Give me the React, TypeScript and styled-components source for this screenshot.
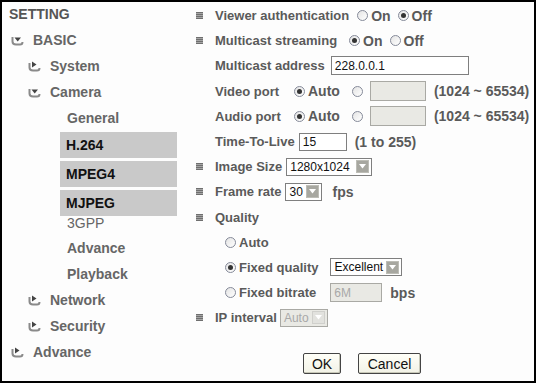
import React from "react";
import styled, {createGlobalStyle} from "styled-components";

const GlobalStyle = createGlobalStyle`
  html, body {
    margin: 0;
    padding: 0;
    background: #fff;
  }
  body {
    font-family: "Liberation Sans", Arial, sans-serif;
  }
`;

const Frame = styled.div`
  width: 536px;
  height: 383px;
  box-sizing: border-box;
  border: 2px solid #000;
  background: #fdfdfd;
  display: flex;
  overflow: hidden;
`;

// ---------- left menu ----------
const Menu = styled.div`
  width: 183px;
  flex: none;
  display: flex;
  flex-direction: column;
`;

const MenuTitle = styled.div`
  height: 25px;
  line-height: 25px;
  padding-left: 7px;
  font-size: 14px;
  font-weight: bold;
  color: #555;
`;

const MenuItem = styled.div<{$pad: number; $h?: number; $thin?: boolean}>`
  display: flex;
  align-items: ${p => (p.$thin ? "flex-start" : "center")};
  height: ${p => p.$h || 26}px;
  line-height: ${p => (p.$thin ? "14px" : "normal")};
  padding-left: ${p => p.$pad}px;
  font-size: 14px;
  font-weight: ${p => (p.$thin ? "normal" : "bold")};
  color: #666;
`;

const TreeIcon = styled.svg`
  width: 14px;
  height: 12px;
  margin-right: 9px;
  flex: none;
`;

const SubBox = styled.div<{$mt: number}>`
  display: flex;
  align-items: center;
  height: 26px;
  width: 111px;
  margin: ${p => p.$mt}px 0 0 58px;
  padding-left: 6px;
  background: #c9c9c9;
  font-size: 14px;
  font-weight: bold;
  color: #111;
`;

function Arrow({open}: {open: boolean}) {
  return (
    <TreeIcon viewBox="0 0 14 12">
      <path d="M2.5 3 V7.5 Q2.5 10.5 6 10.5 H10 Q12.5 10.5 12.5 8" fill="none" stroke="#8a8a8a" strokeWidth="2"/>
      {open
        ? <polygon points="4.5,3.5 11,3.5 7.7,7.5" fill="#444"/>
        : <polygon points="5,1.5 9.5,4.5 5,7.5" fill="#444"/>}
    </TreeIcon>
  );
}

// ---------- right panel ----------
const Panel = styled.div`
  flex: 1;
  display: flex;
  flex-direction: column;
  padding-top: 1px;
`;

const Row = styled.div<{$indent: number}>`
  display: flex;
  align-items: center;
  height: 25.2px;
  padding-left: ${p => p.$indent}px;
  white-space: nowrap;
`;

const Bullet = styled.span`
  width: 7px;
  height: 7px;
  margin-right: 12px;
  flex: none;
  background: repeating-linear-gradient(#6f6f6f 0 1px, #a5a5a5 1px 2px);
`;

const Label = styled.span<{$w?: number}>`
  font-size: 13px;
  font-weight: bold;
  color: #5a5a5a;
  ${p => (p.$w ? `width: ${p.$w}px; flex: none;` : "")}
`;

const Opt = styled.span<{$ml?: number; $size?: number}>`
  margin-left: ${p => p.$ml || 0}px;
  font-size: ${p => p.$size || 14}px;
  font-weight: bold;
  color: #5a5a5a;
`;

const Radio = styled.span<{$ml?: number; $on?: boolean}>`
  position: relative;
  width: 9px;
  height: 9px;
  flex: none;
  margin-left: ${p => p.$ml || 0}px;
  margin-right: 3px;
  border: 1px solid #858a99;
  border-radius: 50%;
  background: linear-gradient(135deg, #e4e4e4, #fff);
  &::after {
    content: "";
    display: ${p => (p.$on ? "block" : "none")};
    position: absolute;
    left: 2px;
    top: 2px;
    width: 5px;
    height: 5px;
    border-radius: 50%;
    background: #333;
  }
`;

const TextBox = styled.span<{$w: number; $ml?: number; $off?: boolean; $h?: number}>`
  display: flex;
  align-items: center;
  box-sizing: border-box;
  width: ${p => p.$w}px;
  height: ${p => p.$h || 18}px;
  margin-left: ${p => p.$ml || 0}px;
  padding-left: 3px;
  border: 1px solid ${p => (p.$off ? "#a9a9a4" : "#7f7f7f")};
  background: ${p => (p.$off ? "#e9e9e4" : "#fff")};
  font-size: 12px;
  color: ${p => (p.$off ? "#a8a8a8" : "#111")};
  flex: none;
`;

const Select = styled(TextBox)`
  justify-content: space-between;
  padding-right: 2px;
`;

const DropBtn = styled.span<{$off?: boolean}>`
  display: flex;
  align-items: center;
  justify-content: center;
  width: 13px;
  height: 13px;
  background: ${p => (p.$off ? "#e2e2de" : "#a7a7a0")};
  border: 1px solid ${p => (p.$off ? "#d0d0cc" : "#bdbdb6")};
  box-sizing: border-box;
`;

const ButtonRow = styled.div`
  display: flex;
  gap: 17px;
  margin-top: 23px;
  padding-left: 118px;
`;

const Button = styled.button<{$w: number}>`
  width: ${p => p.$w}px;
  height: 21px;
  padding: 0;
  font-family: "Liberation Sans", Arial, sans-serif;
  font-size: 14px;
  color: #111;
  background: linear-gradient(#fffff8, #f2f2e6);
  border: 1px solid #444;
  border-radius: 2px;
  box-shadow: inset -1px -1px 0 #c8c8b8;
`;

function Drop({value, w, ml, off}: {value: string; w: number; ml?: number; off?: boolean}) {
  return (
    <Select $w={w} $ml={ml} $off={off}>
      {value}
      <DropBtn $off={off}>
        <svg width="7" height="5" viewBox="0 0 7 5">
          <polygon points="0,0 7,0 3.5,4.5" fill="#fff"/>
        </svg>
      </DropBtn>
    </Select>
  );
}

export default function App() {
  return (
    <>
      <GlobalStyle/>
      <Frame>
        <Menu>
          <MenuTitle>SETTING</MenuTitle>
          <MenuItem $pad={8}><Arrow open/>BASIC</MenuItem>
          <MenuItem $pad={25}><Arrow open={false}/>System</MenuItem>
          <MenuItem $pad={25}><Arrow open/>Camera</MenuItem>
          <MenuItem $pad={65}>General</MenuItem>
          <SubBox $mt={1}>H.264</SubBox>
          <SubBox $mt={3}>MPEG4</SubBox>
          <SubBox $mt={3}>MJPEG</SubBox>
          <MenuItem $pad={65} $h={19} $thin>3GPP</MenuItem>
          <MenuItem $pad={65}>Advance</MenuItem>
          <MenuItem $pad={65}>Playback</MenuItem>
          <MenuItem $pad={25}><Arrow open={false}/>Network</MenuItem>
          <MenuItem $pad={25}><Arrow open={false}/>Security</MenuItem>
          <MenuItem $pad={8}><Arrow open={false}/>Advance</MenuItem>
        </Menu>

        <Panel>
          <Row $indent={11}>
            <Bullet/><Label>Viewer authentication</Label>
            <Radio $ml={8}/><Opt>On</Opt>
            <Radio $ml={7} $on/><Opt>Off</Opt>
          </Row>
          <Row $indent={11}>
            <Bullet/><Label>Multicast streaming</Label>
            <Radio $ml={12} $on/><Opt>On</Opt>
            <Radio $ml={7}/><Opt>Off</Opt>
          </Row>
          <Row $indent={30}>
            <Label>Multicast address</Label>
            <TextBox $w={138} $ml={6} $h={19}>228.0.0.1</TextBox>
          </Row>
          <Row $indent={30}>
            <Label $w={79}>Video port</Label>
            <Radio $on/><Opt>Auto</Opt>
            <Radio $ml={12}/>
            <TextBox $w={56} $ml={4} $h={20} $off/>
            <Opt $ml={8}>(1024 ~ 65534)</Opt>
          </Row>
          <Row $indent={30}>
            <Label $w={79}>Audio port</Label>
            <Radio $on/><Opt>Auto</Opt>
            <Radio $ml={12}/>
            <TextBox $w={56} $ml={4} $h={20} $off/>
            <Opt $ml={8}>(1024 ~ 65534)</Opt>
          </Row>
          <Row $indent={30}>
            <Label>Time-To-Live</Label>
            <TextBox $w={48} $ml={4}>15</TextBox>
            <Opt $ml={8}>(1 to 255)</Opt>
          </Row>
          <Row $indent={11}>
            <Bullet/><Label>Image Size</Label>
            <Drop value="1280x1024" w={86} ml={4}/>
          </Row>
          <Row $indent={11}>
            <Bullet/><Label>Frame rate</Label>
            <Drop value="30" w={37} ml={4}/>
            <Opt $ml={10}>fps</Opt>
          </Row>
          <Row $indent={11}>
            <Bullet/><Label>Quality</Label>
          </Row>
          <Row $indent={40}>
            <Radio/><Label>Auto</Label>
          </Row>
          <Row $indent={40}>
            <Radio $on/><Label>Fixed quality</Label>
            <Drop value="Excellent" w={72} ml={12}/>
          </Row>
          <Row $indent={40}>
            <Radio/><Label>Fixed bitrate</Label>
            <TextBox $w={52} $ml={14} $h={19} $off>6M</TextBox>
            <Opt $ml={8}>bps</Opt>
          </Row>
          <Row $indent={11}>
            <Bullet/><Label>IP interval</Label>
            <Drop value="Auto" w={48} ml={3} off/>
          </Row>
          <ButtonRow>
            <Button $w={38}>OK</Button>
            <Button $w={63}>Cancel</Button>
          </ButtonRow>
        </Panel>
      </Frame>
    </>
  );
}
